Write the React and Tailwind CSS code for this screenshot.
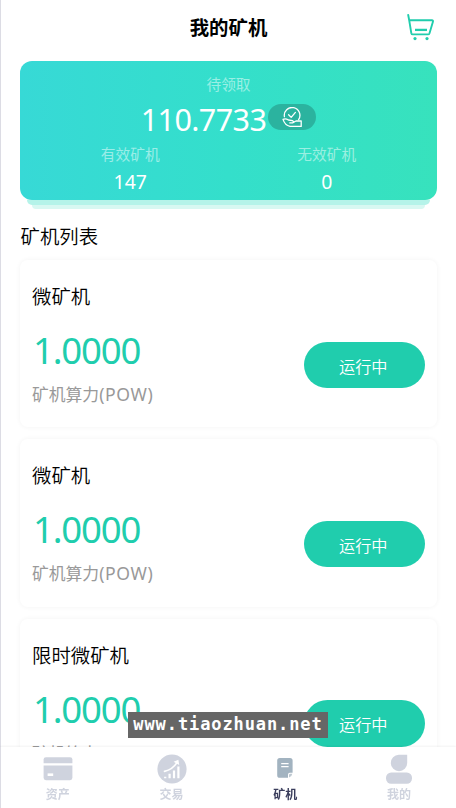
import React from "react";

const machines = [
  { id: 1, name: "微矿机", power: "1.0000" },
  { id: 2, name: "微矿机", power: "1.0000" },
  { id: 3, name: "限时微矿机", power: "1.0000" },
];

const CartIcon = () => (
  <svg width="30" height="30" viewBox="0 0 30 30" fill="none" stroke="#20cdad" strokeWidth="1.9" strokeLinecap="round" strokeLinejoin="round">
    <path d="M2.2 2 L3.3 7.8 L5.3 20.2 Q5.6 21.4 6.8 21.4 H22 Q23.1 21.4 23.5 20.2 L27 8.6 Q27.2 7.3 26 7.3 H3.3" />
    <path d="M9 16.9 H21" strokeWidth="2.3" strokeLinecap="butt" />
    <circle cx="9" cy="25.6" r="1.6" fill="#20cdad" stroke="none" />
    <circle cx="21" cy="25.6" r="1.6" fill="#20cdad" stroke="none" />
  </svg>
);

const ClaimIcon = () => (
  <svg width="20" height="21" viewBox="0 0 20 21" fill="none" stroke="white" strokeWidth="1.3" strokeLinecap="round" strokeLinejoin="round">
    <path d="M2.4 9.6 A7.8 7.8 0 1 1 16.6 12.6" />
    <path d="M6.6 7.8 L9.2 10.4 L13.4 5.4" />
    <path d="M1 12.4 Q3.5 11 6.4 13 L10.4 13.6 Q12.2 14.4 10.8 15.9 H7.8 M11.4 15.4 L14 14 H19.2 V19.4 H8 Q3 18.4 1 12.4" />
  </svg>
);

const WalletIcon = () => (
  <svg width="30" height="30" viewBox="0 0 30 30" fill="#cfd3de">
    <path d="M3 3.2 H27 Q29.4 3.2 29.4 5.6 V9.2 H0.6 V5.6 Q0.6 3.2 3 3.2Z" />
    <path d="M0.6 11.4 H29.4 V23.8 Q29.4 26.2 27 26.2 H3 Q0.6 26.2 0.6 23.8Z" />
    <rect x="4.6" y="19.4" width="5.6" height="2.6" fill="white" />
  </svg>
);

const TradeIcon = () => (
  <svg width="30" height="30" viewBox="0 0 30 30">
    <circle cx="15" cy="15" r="14.6" fill="#cfd3de" />
    <path d="M8.2 24.3 V22.8 M12.6 24.3 V19.8 M17 24.3 V16.4 M21.4 24.3 V12.6" stroke="white" strokeWidth="2.2" fill="none" />
    <path d="M7.5 17.4 Q15.5 15.5 20 8.6" stroke="white" strokeWidth="1.7" fill="none" strokeLinecap="round" />
    <path d="M16.6 7.8 L21.4 5.8 L22.2 11Z" fill="white" />
  </svg>
);

const MinerIcon = () => (
  <svg width="30" height="30" viewBox="0 0 30 30">
    <path d="M9.8 4 H20 Q22.6 4 22.6 6.6 V18.8 H19.8 Q18 18.8 18 20.8 V23.8 H9.8 Q7.2 23.8 7.2 21.2 V6.6 Q7.2 4 9.8 4Z" fill="#a2b3c0" />
    <path d="M19 23.4 V21 Q19 19.8 20.4 19.8 H22.3 Q22 22.6 19 23.4Z" fill="#bdc8d1" />
    <path d="M11.2 9.6 H18.6 M11.2 12.6 H18.6" stroke="white" strokeWidth="1.1" />
  </svg>
);

const ProfileIcon = () => (
  <svg width="30" height="30" viewBox="0 0 30 30" fill="#cfd3de">
    <path d="M14.8 0.8 H23.2 V9 A8.2 8.2 0 1 1 14.8 0.8Z" />
    <rect x="2" y="18.4" width="26" height="11.4" rx="5.2" />
  </svg>
);

const tabs = [
  { label: "资产", icon: WalletIcon },
  { label: "交易", icon: TradeIcon },
  { label: "矿机", icon: MinerIcon, active: true },
  { label: "我的", icon: ProfileIcon },
];

const Summary = () => (
  <section className="mx-[19px] h-[148px]">
    <div className="h-[139px] rounded-xl bg-linear-to-r from-[#37d9d6] via-[#34dfcb] to-[#37e2bd] pt-[12px] text-center text-white">
      <div className="h-[22px] text-[14.7px] leading-[23px] text-white/50">待领取</div>
      <div className="mt-[2px] flex h-[44px] items-center justify-center">
        <span className="pt-px text-[30.5px] leading-[43px] tracking-[-0.6px]">110.7733</span>
        <span className="mb-[4px] ml-[2px] flex h-[26px] w-[48px] items-center justify-center rounded-full bg-[#2bb39f]">
          <ClaimIcon />
        </span>
      </div>
      <div className="mx-[12px] grid grid-cols-2">
        <div>
          <div className="h-[25px] text-[14.7px] leading-[26px] text-white/50">有效矿机</div>
          <div className="text-[19.4px] leading-[31px]">147</div>
        </div>
        <div>
          <div className="h-[25px] text-[14.7px] leading-[26px] text-white/50">无效矿机</div>
          <div className="text-[19.4px] leading-[31px]">0</div>
        </div>
      </div>
    </div>
    <div className="mx-[7px] h-[5px] rounded-b-xl bg-[#b5f3e9]" />
    <div className="mx-[12px] h-[4px] rounded-b-xl bg-[#d8f8f2]" />
  </section>
);

const MachineCard = ({ name, power }) => (
  <div className="flex h-[167.3px] items-start justify-between rounded-lg bg-white pr-[12px] pl-[12px] shadow-[0_0_4px_1px_rgba(0,0,0,0.035)]">
    <div>
      <div className="mt-[22px] text-[19.4px] leading-[30px] font-[350]">{name}</div>
      <div className="mt-[12px] pl-px text-[36.5px] leading-[52px] tracking-[-1.15px] text-[#20cdad]">{power}</div>
      <div className="mt-[5px] text-[16.8px] leading-[26px] text-[#999]">
        矿机算力<span className="text-[17.6px] tracking-[0.6px]">(POW)</span>
      </div>
    </div>
    <button className="mt-[81.5px] h-[46.5px] w-[121.5px] rounded-full bg-[#20cdad] pt-[4px] pr-[2px] text-[16.2px] font-[350] text-white">
      运行中
    </button>
  </div>
);

const TabBar = () => (
  <nav className="fixed right-0 bottom-0 left-0 grid h-[61px] grid-cols-4 border-l border-[#dcdce4] bg-white shadow-[0_-1px_2px_rgba(0,0,0,0.05)]">
    {tabs.map(({ label, icon: Icon, active }) => (
      <div key={label} className="flex flex-col items-center pt-[7px]">
        <Icon />
        <span className={active ? "mt-[2px] text-[12px] leading-[18px] font-bold text-[#3a3d5c]" : "mt-[2px] text-[12px] leading-[18px] font-bold text-[#cfd3de]"}>
          {label}
        </span>
      </div>
    ))}
  </nav>
);

const App = () => {
  return (
    <div className="h-screen overflow-hidden border-l border-[#dcdce4] bg-white font-['Noto_Sans','Noto_Sans_CJK_SC',sans-serif] text-black">
      <header className="grid h-[61px] grid-cols-[1fr_auto_1fr] items-center px-[19px]">
        <h1 className="col-start-2 mb-[6px] text-[19.4px] font-bold">我的矿机</h1>
        <div className="mr-px mb-[6px] justify-self-end">
          <CartIcon />
        </div>
      </header>

      <Summary />

      <h2 className="mt-[12px] ml-[19.5px] h-[30px] text-[19.4px] leading-[31px] font-[350]">矿机列表</h2>

      <div className="mx-[19px] mt-[9px] flex flex-col gap-[12px]">
        {machines.map((machine) => (
          <MachineCard key={machine.id} name={machine.name} power={machine.power} />
        ))}
      </div>

      <TabBar />

      <div className="fixed top-[712px] left-[128px] flex h-[26px] w-[200px] items-center justify-center bg-[#666] font-['DejaVu_Sans_Mono',monospace] text-[17px] font-bold tracking-[0.9px] text-white">
        www.tiaozhuan.net
      </div>
    </div>
  );
};

export default App;
